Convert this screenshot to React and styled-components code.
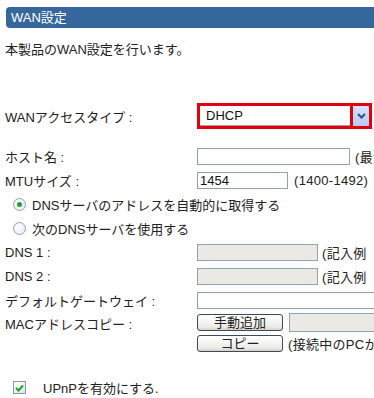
import styled, { createGlobalStyle } from "styled-components";

const GlobalStyle = createGlobalStyle`
  body {
    margin: 0;
    background: #ffffff;
    font-family: "Liberation Sans", "Noto Sans CJK JP", sans-serif;
    font-size: 13px;
    color: #222222;
  }
`;

const Page = styled.div`
  width: 374px;
  height: 398px;
  overflow: hidden;
  padding: 7px 0 0 5px;
  box-sizing: border-box;
`;

const Header = styled.div`
  height: 21px;
  line-height: 21px;
  margin-left: 1px;
  padding-left: 5px;
  background: #35679d;
  border-radius: 4px 0 0 4px;
  color: #ffffff;
  font-size: 13px;
`;

const Description = styled.p`
  margin: 13px 0 0;
  line-height: 18px;
`;

const Row = styled.div`
  display: flex;
  align-items: ${(props) => props.align || "center"};
  height: ${(props) => props.h || 24}px;
  margin-top: ${(props) => props.mt || 0}px;
  white-space: nowrap;
`;

const Label = styled.div`
  width: 192px;
  flex: none;
  padding-top: ${(props) => props.pt || 0}px;
`;

const SelectBox = styled.div`
  display: flex;
  width: 175px;
  height: 26px;
  border: 3px solid #e00010;
  box-sizing: border-box;
  background: #e00010;
`;

const SelectValue = styled.div`
  flex: 1;
  background: #ffffff;
  border-bottom: 1px solid #a0a0a0;
  padding-left: 6px;
  line-height: 19px;
  color: #111111;
  font-size: 13px;
`;

const SelectArrow = styled.div`
  width: 16px;
  margin-left: 3px;
  background: linear-gradient(#d6e2fb, #b7cbf3);
  display: flex;
  align-items: center;
  justify-content: center;
`;

const TextInput = styled.div`
  width: ${(props) => props.w}px;
  height: ${(props) => props.h || 17}px;
  margin-left: ${(props) => props.ml || 0}px;
  box-sizing: border-box;
  border: 1px solid #8ea3b8;
  background: ${(props) => (props.disabled ? "#ebe9e3" : "#ffffff")};
  padding-left: 2px;
  line-height: 15px;
  font-size: 13px;
  color: #111111;
  flex: none;
`;

const Note = styled.span`
  margin-left: ${(props) => props.ml || 5}px;
  font-size: 13px;
  letter-spacing: 0.3px;
`;

const RadioRow = styled.label`
  display: flex;
  align-items: center;
  height: 24px;
  padding-left: 8px;
  gap: 6px;
`;

const Radio = styled.span`
  width: 11px;
  height: 11px;
  border-radius: 50%;
  border: 1px solid #8fa6c0;
  background: radial-gradient(circle at 40% 40%, #ffffff, #dfe6ee);
  display: flex;
  align-items: center;
  justify-content: center;
  &::after {
    content: "";
    width: 5px;
    height: 5px;
    border-radius: 50%;
    background: ${(props) => (props.checked ? "#2a9d2a" : "transparent")};
  }
`;

const Button = styled.div`
  width: 86px;
  height: 17px;
  box-sizing: border-box;
  border: 1px solid #3c4a5c;
  border-radius: 3px;
  background: linear-gradient(#ffffff, #ecebe6 80%, #d6d0c5);
  text-align: center;
  line-height: 15px;
  font-size: 13px;
  flex: none;
`;

const ButtonStack = styled.div`
  display: flex;
  flex-direction: column;
  gap: 4px;
`;

const CheckRow = styled.div`
  display: flex;
  align-items: center;
  margin-top: 23px;
  padding-left: 8px;
  gap: 17px;
`;

const CheckBox = styled.span`
  width: 11px;
  height: 11px;
  border: 1px solid #7f9db9;
  background: linear-gradient(135deg, #ffffff, #dfe3ea);
  display: flex;
  align-items: center;
  justify-content: center;
`;

export default function App() {
  return (
    <>
      <GlobalStyle />
      <Page>
        <Header>WAN設定</Header>
        <Description>本製品のWAN設定を行います。</Description>

        <Row mt={44} h={26}>
          <Label>WANアクセスタイプ :</Label>
          <SelectBox>
            <SelectValue>DHCP</SelectValue>
            <SelectArrow>
              <svg width="9" height="6" viewBox="0 0 9 6">
                <path d="M1 1 L4.5 4.5 L8 1" stroke="#2e4f8f" strokeWidth="2" fill="none" />
              </svg>
            </SelectArrow>
          </SelectBox>
        </Row>

        <Row mt={15}>
          <Label>ホスト名 :</Label>
          <TextInput w={153} />
          <Note ml={5}>(最大63文字)</Note>
        </Row>
        <Row>
          <Label>MTUサイズ :</Label>
          <TextInput w={91}>1454</TextInput>
          <Note ml={6}>(1400-1492)</Note>
        </Row>

        <RadioRow>
          <Radio checked />
          DNSサーバのアドレスを自動的に取得する
        </RadioRow>
        <RadioRow>
          <Radio />
          次のDNSサーバを使用する
        </RadioRow>

        <Row>
          <Label>DNS 1 :</Label>
          <TextInput w={121} disabled />
          <Note ml={4}>(記入例</Note>
        </Row>
        <Row>
          <Label>DNS 2 :</Label>
          <TextInput w={121} disabled />
          <Note ml={4}>(記入例</Note>
        </Row>
        <Row>
          <Label>デフォルトゲートウェイ :</Label>
          <TextInput w={190} />
        </Row>

        <Row h={42} align="flex-start" mt={1}>
          <Label pt={1}>MACアドレスコピー :</Label>
          <ButtonStack>
            <Row h={18}>
              <Button>手動追加</Button>
              <TextInput w={100} h={19} ml={6} disabled />
            </Row>
            <Row h={17}>
              <Button>コピー</Button>
              <Note ml={5}>(接続中のPCから取得)</Note>
            </Row>
          </ButtonStack>
        </Row>

        <CheckRow>
          <CheckBox>
            <svg width="9" height="8" viewBox="0 0 9 8">
              <path d="M1 4 L3.5 6.5 L8 1.5" stroke="#21a121" strokeWidth="2" fill="none" />
            </svg>
          </CheckBox>
          UPnPを有効にする.
        </CheckRow>
      </Page>
    </>
  );
}
